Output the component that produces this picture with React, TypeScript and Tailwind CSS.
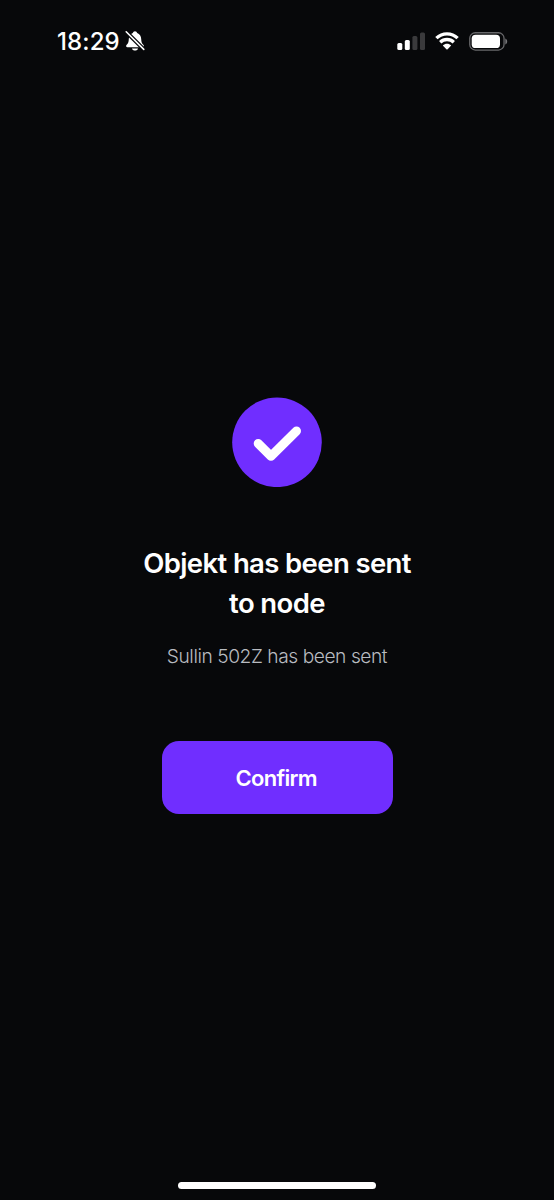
function SilentBell() {
  return (
    <svg width="20" height="22" viewBox="0 0 20 22" fill="none">
      <path
        d="M10 1.2C8.9 1.2 8 2 7.8 3.1C5.3 4 3.9 6.2 3.8 9C3.7 12.2 3.2 13.3 1.7 14.8C.7 15.8 1 17.2 2.4 17.2H17.6C19 17.2 19.3 15.8 18.3 14.8C16.8 13.3 16.3 12.2 16.2 9C16.1 6.2 14.7 4 12.2 3.1C12 2 11.1 1.2 10 1.2Z"
        fill="white"
      />
      <path d="M7 18.4H13C12.7 19.8 11.5 20.6 10 20.6C8.5 20.6 7.3 19.8 7 18.4Z" fill="white" />
      <path d="M0.5 1.1L19.5 20.1" stroke="#07080a" strokeWidth="4" />
      <path d="M1.2 1.8L18.8 19.4" stroke="white" strokeWidth="1.6" strokeLinecap="round" />
    </svg>
  );
}

function Signal() {
  return (
    <svg width="28" height="18" viewBox="0 0 28 18">
      <rect x="0.3" y="11" width="5" height="7" rx="1.5" fill="white" />
      <rect x="7.8" y="8" width="5" height="10" rx="1.5" fill="white" />
      <rect x="15.4" y="4" width="5" height="14" rx="1.5" fill="#3a3a3c" />
      <rect x="23" y="0.5" width="5" height="17.5" rx="1.5" fill="#3a3a3c" />
    </svg>
  );
}

function Wifi() {
  return (
    <svg width="24" height="18" viewBox="0 0 24 18" fill="none">
      <path d="M1.4 6.2C7.3 0.3 16.7 0.3 22.6 6.2" stroke="white" strokeWidth="3.3" />
      <path d="M5.2 10.2C9 6.6 15 6.6 18.8 10.2" stroke="white" strokeWidth="3.3" />
      <path d="M7.8 13.5C10.2 11.3 13.8 11.3 16.2 13.5L12.6 17.2C12.2 17.6 11.8 17.6 11.4 17.2Z" fill="white" />
    </svg>
  );
}

function Battery() {
  return (
    <svg width="39" height="19" viewBox="0 0 39 19" fill="none">
      <rect x="0.75" y="0.75" width="34.3" height="17.3" rx="5.6" stroke="#68686b" strokeWidth="1.3" />
      <rect x="2.7" y="2.7" width="28.3" height="13.4" rx="3.9" fill="white" />
      <path d="M36.3 6.4C38.8 7.4 38.8 11.4 36.3 12.4Z" fill="#77777a" />
    </svg>
  );
}

function StatusBar() {
  return (
    <header className="flex h-[82px] items-center justify-between pr-[46px] pl-[57px] text-white">
      <div className="flex items-center gap-1">
        <span className="w-[64px] pt-px text-[24px] font-medium tracking-[0.1px] whitespace-nowrap">
          18:29
        </span>
        <SilentBell />
      </div>
      <div className="flex items-center gap-[10px]">
        <Signal />
        <Wifi />
        <Battery />
      </div>
    </header>
  );
}

function App() {
  return (
    <div className="flex h-[1200px] w-full flex-col bg-[#07080a] font-['Inter','Liberation_Sans',sans-serif]">
      <StatusBar />
      <main className="flex flex-1 flex-col items-center pt-[315px] text-center">
        <svg width="90" height="90" viewBox="0 0 90 90" fill="none">
          <circle cx="45" cy="45.3" r="44.8" fill="#702eff" />
          <path
            d="M26.2 46.5L39 59.3L64.5 34"
            stroke="white"
            strokeWidth="9"
            strokeLinecap="round"
            strokeLinejoin="round"
          />
        </svg>
        <h1 className="mt-[57px] w-[290px] text-[27.5px] leading-[39.5px] font-semibold tracking-[-0.62px] text-white">
          Objekt has been sent
          <br />
          to node
        </h1>
        <p className="mt-[19px] text-[19.2px] leading-7 font-light tracking-[-0.45px] text-[#b8bbc0]">
          Sullin 502Z has been sent
        </p>
        <button className="mt-[71px] h-[73px] w-[231px] rounded-[17px] bg-[#702eff] pt-0.5 pr-[1.5px] text-[22px] font-semibold tracking-[-0.7px] text-white">
          Confirm
        </button>
      </main>
      <footer className="flex justify-center pb-[11.5px]">
        <div className="h-[7px] w-[198px] rounded-full bg-white" />
      </footer>
    </div>
  );
}

export default App;
